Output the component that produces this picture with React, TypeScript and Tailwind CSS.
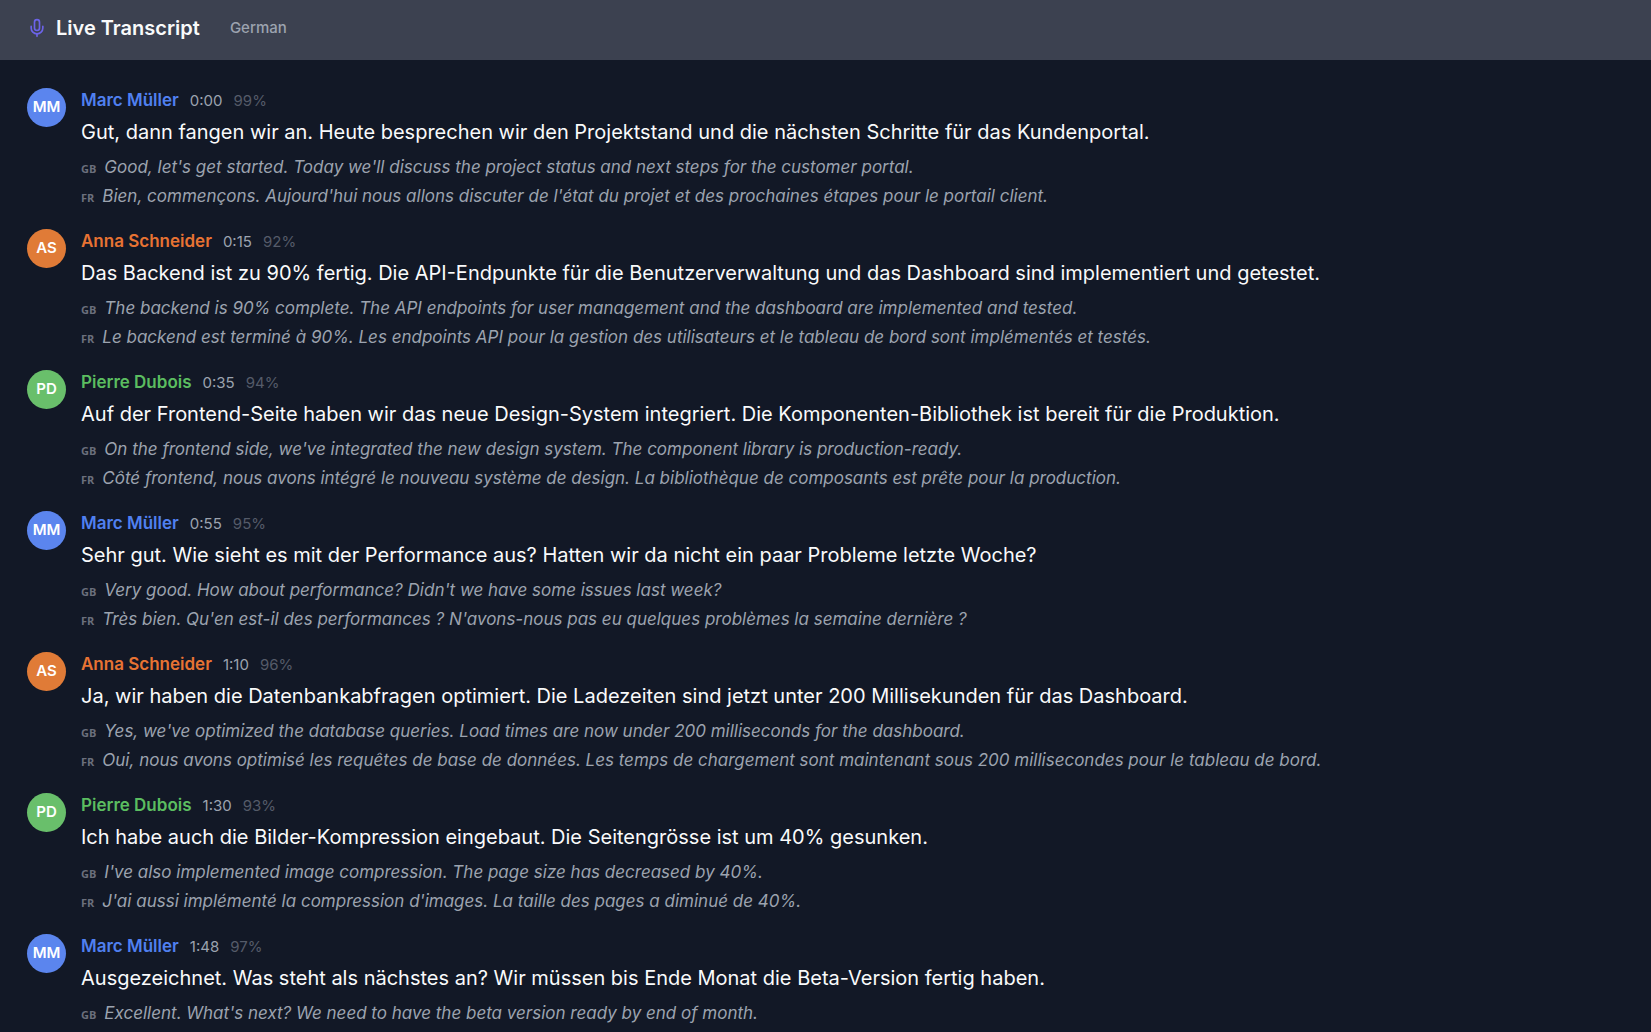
import { Mic } from "lucide-react"

type Speaker = {
  name: string
  initials: string
  avatar: string
  color: string
}

const marc: Speaker = {
  name: "Marc Müller",
  initials: "MM",
  avatar: "bg-[#5b85ee]",
  color: "text-[#5080f0]",
}

const anna: Speaker = {
  name: "Anna Schneider",
  initials: "AS",
  avatar: "bg-[#e07b37]",
  color: "text-[#e87333]",
}

const pierre: Speaker = {
  name: "Pierre Dubois",
  initials: "PD",
  avatar: "bg-[#69bf6b]",
  color: "text-[#5bbd60]",
}

const entries = [
  {
    speaker: marc,
    time: "0:00",
    confidence: 99,
    text: "Gut, dann fangen wir an. Heute besprechen wir den Projektstand und die nächsten Schritte für das Kundenportal.",
    en: "Good, let's get started. Today we'll discuss the project status and next steps for the customer portal.",
    fr: "Bien, commençons. Aujourd'hui nous allons discuter de l'état du projet et des prochaines étapes pour le portail client.",
  },
  {
    speaker: anna,
    time: "0:15",
    confidence: 92,
    text: "Das Backend ist zu 90% fertig. Die API-Endpunkte für die Benutzerverwaltung und das Dashboard sind implementiert und getestet.",
    en: "The backend is 90% complete. The API endpoints for user management and the dashboard are implemented and tested.",
    fr: "Le backend est terminé à 90%. Les endpoints API pour la gestion des utilisateurs et le tableau de bord sont implémentés et testés.",
  },
  {
    speaker: pierre,
    time: "0:35",
    confidence: 94,
    text: "Auf der Frontend-Seite haben wir das neue Design-System integriert. Die Komponenten-Bibliothek ist bereit für die Produktion.",
    en: "On the frontend side, we've integrated the new design system. The component library is production-ready.",
    fr: "Côté frontend, nous avons intégré le nouveau système de design. La bibliothèque de composants est prête pour la production.",
  },
  {
    speaker: marc,
    time: "0:55",
    confidence: 95,
    text: "Sehr gut. Wie sieht es mit der Performance aus? Hatten wir da nicht ein paar Probleme letzte Woche?",
    en: "Very good. How about performance? Didn't we have some issues last week?",
    fr: "Très bien. Qu'en est-il des performances ? N'avons-nous pas eu quelques problèmes la semaine dernière ?",
  },
  {
    speaker: anna,
    time: "1:10",
    confidence: 96,
    text: "Ja, wir haben die Datenbankabfragen optimiert. Die Ladezeiten sind jetzt unter 200 Millisekunden für das Dashboard.",
    en: "Yes, we've optimized the database queries. Load times are now under 200 milliseconds for the dashboard.",
    fr: "Oui, nous avons optimisé les requêtes de base de données. Les temps de chargement sont maintenant sous 200 millisecondes pour le tableau de bord.",
  },
  {
    speaker: pierre,
    time: "1:30",
    confidence: 93,
    text: "Ich habe auch die Bilder-Kompression eingebaut. Die Seitengrösse ist um 40% gesunken.",
    en: "I've also implemented image compression. The page size has decreased by 40%.",
    fr: "J'ai aussi implémenté la compression d'images. La taille des pages a diminué de 40%.",
  },
  {
    speaker: marc,
    time: "1:48",
    confidence: 97,
    text: "Ausgezeichnet. Was steht als nächstes an? Wir müssen bis Ende Monat die Beta-Version fertig haben.",
    en: "Excellent. What's next? We need to have the beta version ready by end of month.",
  },
]

const Translation = ({ code, lang, text }: { code: string; lang: string; text: string }) => (
  <p className="flex items-baseline gap-2 text-[17px] leading-[29px] text-[#9ca3af]">
    <span className="font-['Open_Sans',sans-serif] text-[11px] leading-none font-bold text-[#6b6f7c]">
      {code}
    </span>
    <span lang={lang} className="italic">
      {text}
    </span>
  </p>
)

const App = () => {
  return (
    <div className="min-h-screen bg-[#121826] font-['Inter',sans-serif]">
      <header className="flex h-15 items-center bg-[#3c4150] px-[27px] pb-1">
        <Mic size={20} strokeWidth={2} className="text-[#6c63e8]" />
        <h1 className="ml-[9px] text-xl font-semibold text-[#f9fafb]">
          Live Transcript
        </h1>
        <span className="ml-[30px] text-[15px] font-medium text-[#9ca3af]">
          German
        </span>
      </header>

      <main className="flex flex-col gap-[18px] px-[27px] pt-7">
        {entries.map(({ speaker, time, confidence, text, en, fr }) => (
          <article key={time} className="flex gap-[15px]">
            <div
              className={`flex size-[39px] shrink-0 items-center justify-center rounded-full text-[15px] font-semibold text-white ${speaker.avatar}`}
            >
              {speaker.initials}
            </div>
            <div className="min-w-0 flex-1">
              <div className="flex items-center gap-[11px] leading-[25px]">
                <h2 className={`text-[17px] font-semibold ${speaker.color}`}>
                  {speaker.name}
                </h2>
                <time className="text-[15px] text-[#9ca3af]">{time}</time>
                <span className="text-[15px] text-[#555b69]">
                  {confidence}%
                </span>
              </div>
              <p lang="de" className="mt-[3px] text-xl leading-8 text-[#f9fafb]">
                {text}
              </p>
              <div className="mt-[5px]">
                <Translation code="GB" lang="en" text={en} />
                {fr && <Translation code="FR" lang="fr" text={fr} />}
              </div>
            </div>
          </article>
        ))}
      </main>
    </div>
  )
}

export default App
